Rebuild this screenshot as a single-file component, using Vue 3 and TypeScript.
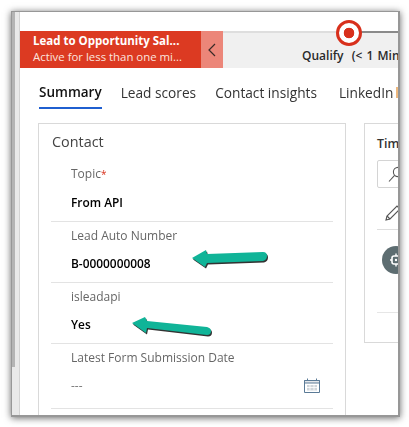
<script setup lang="ts">
interface Field {
  label: string;
  value: string;
  required?: boolean;
  empty?: boolean;
}

const tabs = ["Summary", "Lead scores", "Contact insights", "LinkedIn"];

const fields: Field[] = [
  { label: "Topic", value: "From API", required: true },
  { label: "Lead Auto Number", value: "B-0000000008" },
  { label: "isleadapi", value: "Yes" },
  { label: "Latest Form Submission Date", value: "---", empty: true },
];
</script>

<template>
  <div class="page">
    <div class="frame">
      <div class="strip"></div>
      <div class="screen">
        <div class="process">
          <div class="flag">
            <div class="flag-title">Lead to Opportunity Sal...</div>
            <div class="flag-sub">Active for less than one mi...</div>
          </div>
          <div class="flag-toggle">
            <svg width="8" height="14" viewBox="0 0 8 14">
              <path d="M7 1 1 7l6 6" fill="none" stroke="#3a2a28" stroke-width="1.2" />
            </svg>
          </div>
          <div class="stages">
            <div class="stage-name">Qualify&nbsp; (&lt; 1 Min)</div>
            <span class="stage-dot"></span>
          </div>
        </div>

        <nav class="tabs">
          <span
            v-for="(tab, index) in tabs"
            :key="tab"
            class="tab"
            :class="{ active: index === 0 }"
          >{{ tab }}</span>
        </nav>

        <div class="columns">
          <section class="card contact">
            <h3 class="card-title">Contact</h3>
            <div v-for="field in fields" :key="field.label" class="field">
              <div class="label">
                {{ field.label }}<span v-if="field.required" class="req">*</span>
              </div>
              <div class="value-row">
                <span class="value" :class="{ empty: field.empty }">{{ field.value }}</span>
                <svg v-if="field.empty" class="cal" width="16" height="15" viewBox="0 0 16 15">
                  <path d="M.5 2.5h15v12H.5z" fill="#fff" stroke="#5a7a96" />
                  <path d="M.5 2.5h15v2.5H.5z" fill="#e3e6ea" stroke="#5a7a96" />
                  <path d="M3.5.5v2M12.5.5v2" stroke="#5a7a96" />
                  <path d="M3 7h10v5.5H3z" fill="#cfd5da" />
                  <path d="M6 7v5.5M10 7v5.5M3 9.5h10" stroke="#fff" stroke-width=".8" />
                </svg>
              </div>
            </div>
          </section>

          <section class="card timeline">
            <h3 class="timeline-title">Timeline</h3>
            <div class="search">
              <svg width="16" height="17" viewBox="0 0 16 17">
                <circle cx="10" cy="6" r="4.6" fill="none" stroke="#555" stroke-width="1.1" />
                <path d="M6.6 9.4 1 15.5" fill="none" stroke="#555" stroke-width="1.1" />
              </svg>
            </div>
            <div class="tools">
              <svg width="16" height="16" viewBox="0 0 16 16">
                <path d="M1 15l1-4L12 1l3 3L5 14z" fill="none" stroke="#555" stroke-width="1.1" />
                <path d="M2 11l3 3" stroke="#555" stroke-width="1.1" />
              </svg>
            </div>
            <div class="entry">
              <span class="avatar">
                <svg width="12" height="14" viewBox="0 0 12 14">
                  <rect x="2" y="3" width="8" height="8" rx="2" fill="none" stroke="#fff" stroke-width="1.6" />
                  <path d="M6 .5V3M6 11v2.5M0 7h2M10 7h2" stroke="#fff" stroke-width="1.4" />
                  <circle cx="6" cy="7" r="1.2" fill="#fff" />
                </svg>
              </span>
            </div>
          </section>
        </div>
      </div>
    </div>

    <svg class="arrows" width="409" height="427" viewBox="0 0 409 427">
      <g>
        <path
          class="arrow-shadow"
          d="M192 258 206 250 207 254 263 252Q267 252 267 256 267 260 263 261L207 263 205 267Z"
        />
        <path
          class="arrow-fill"
          d="M192 258 206 250 207 254 263 252Q267 252 267 256 267 260 263 261L207 263 205 267Z"
        />
      </g>
      <g>
        <path
          class="arrow-shadow"
          d="M132 323 145 317 147 321 207 327Q211 328 211 331 211 335 207 335L147 328 146 333Z"
        />
        <path
          class="arrow-fill"
          d="M132 323 145 317 147 321 207 327Q211 328 211 331 211 335 207 335L147 328 146 333Z"
        />
      </g>
    </svg>
  </div>
</template>

<style>
body {
  background: #fff;
}
</style>

<style scoped>
.page {
  position: relative;
  width: 409px;
  height: 427px;
  padding: 11px;
  box-sizing: border-box;
  overflow: hidden;
  font-family: "Open Sans", "Noto Sans", sans-serif;
  color: #222;
}

.frame {
  display: flex;
  width: 389px;
  height: 406px;
  background: #fff;
  border: 1px solid #979797;
  border-width: 1px 2px 2px 1px;
  box-sizing: border-box;
  box-shadow: 0 1px 7px rgba(0, 0, 0, 0.6);
  overflow: hidden;
}

.strip {
  flex: 0 0 7px;
  background: linear-gradient(#b4b4b4, #b4b4b4) 0 0 / 3px 355px no-repeat, #e9e9e9;
  border-right: 1px solid #d4d4d4;
}

.screen {
  flex: 1;
  min-width: 0;
  padding-top: 19px;
  overflow: hidden;
  filter: blur(0.3px);
}

.process {
  display: flex;
  height: 37px;
  background: #f0f0f0;
}

.flag {
  flex: 0 0 181px;
  box-sizing: border-box;
  padding: 2px 0 0 13px;
  background: #dc3a22;
  color: #fff;
  font-size: 11.5px;
  line-height: 16px;
  white-space: nowrap;
}

.flag-title {
  font-weight: 700;
}

.flag-sub {
  font-size: 11.4px;
  color: #fbe4df;
}

.flag-toggle {
  display: flex;
  flex: 0 0 22px;
  align-items: center;
  justify-content: center;
  background: #ec8679;
}

.stages {
  position: relative;
  flex: 1;
  background:
    linear-gradient(#8a8a8a, #8a8a8a) 126px 0 / 100% 2px no-repeat,
    linear-gradient(#dedede, #dedede) 0 0 / 100% 2px no-repeat;
}

.stage-name {
  padding: 16px 0 0 79px;
  font-size: 12px;
  font-weight: 600;
  word-spacing: 1px;
  white-space: nowrap;
  color: #2a2a2a;
}

.stage-dot {
  position: absolute;
  left: 113px;
  top: -11px;
  box-sizing: border-box;
  width: 26px;
  height: 26px;
  border: 3px solid #d8301c;
  border-radius: 50%;
  background: radial-gradient(circle, #d8301c 0 5px, #fff 5.6px);
}

.tabs {
  display: flex;
  gap: 19px;
  padding: 14px 0 0 19px;
  white-space: nowrap;
}

.tab {
  padding-bottom: 4px;
  border-bottom: 2px solid transparent;
  font-size: 13.7px;
  line-height: 21px;
  color: #333;
}

.tab.active {
  font-size: 13.5px;
  font-weight: 600;
  color: #111;
  border-bottom-color: #1f5fd0;
}

.tab:last-child {
  margin-left: 3px;
}

.tab:last-child::after {
  content: "";
  display: inline-block;
  width: 2px;
  height: 11px;
  margin-left: 3px;
  background: #eeb87e;
}

.columns {
  display: flex;
  align-items: flex-start;
  gap: 18px;
  margin: 14px 0 0 18px;
}

.card {
  box-sizing: border-box;
  border: 1px solid #d9d9d9;
  background: #fff;
}

.contact {
  flex: 0 0 308px;
  height: 300px;
  padding: 0 12px;
}

.card-title {
  margin: 8px 0 9px 1px;
  font-size: 14.4px;
  font-weight: 400;
  line-height: 20px;
  color: #444;
}

.field {
  box-sizing: border-box;
  height: 61px;
  padding: 0 0 0 20px;
  border-bottom: 1px solid #e3e3e3;
}

.field:last-child {
  height: 65px;
}

.label {
  padding-top: 5px;
  font-size: 12px;
  line-height: 17px;
  color: #666;
}

.field:first-of-type .label {
  padding-top: 4px;
  margin-bottom: 1px;
}

.req {
  font-size: 10px;
  color: #d8301c;
}

.value-row {
  display: flex;
  align-items: center;
  justify-content: space-between;
  height: 20px;
  margin-top: 9px;
  padding-right: 13px;
}

.value {
  font-size: 11.9px;
  font-weight: 600;
  color: #000;
}

.value.empty {
  font-weight: 400;
  color: #777;
}

.timeline {
  flex: 0 0 120px;
  height: 220px;
  padding: 0 12px;
}

.timeline-title {
  margin: 11px 0 8px;
  font-size: 12.4px;
  font-weight: 600;
  line-height: 17px;
  color: #333;
}

.search {
  box-sizing: border-box;
  height: 28px;
  padding: 5px 0 0 10px;
  border: 1px solid #d4d4d4;
  border-radius: 2px;
}

.tools {
  height: 42px;
  padding: 16px 0 0 8px;
  box-sizing: border-box;
  border-bottom: 1px solid #dedede;
}

.entry {
  height: 83px;
  padding-top: 16px;
  box-sizing: border-box;
  border-bottom: 1px solid #e6e6e6;
}

.avatar {
  display: flex;
  align-items: center;
  justify-content: center;
  width: 28px;
  height: 28px;
  margin-left: 5px;
  border-radius: 50%;
  background: #5d6d71;
}

.arrows {
  position: absolute;
  left: 0;
  top: 0;
  pointer-events: none;
}

.arrow-shadow {
  fill: #333;
  transform: translate(1px, 1.5px);
}

.arrow-fill {
  fill: #10b498;
}
</style>
